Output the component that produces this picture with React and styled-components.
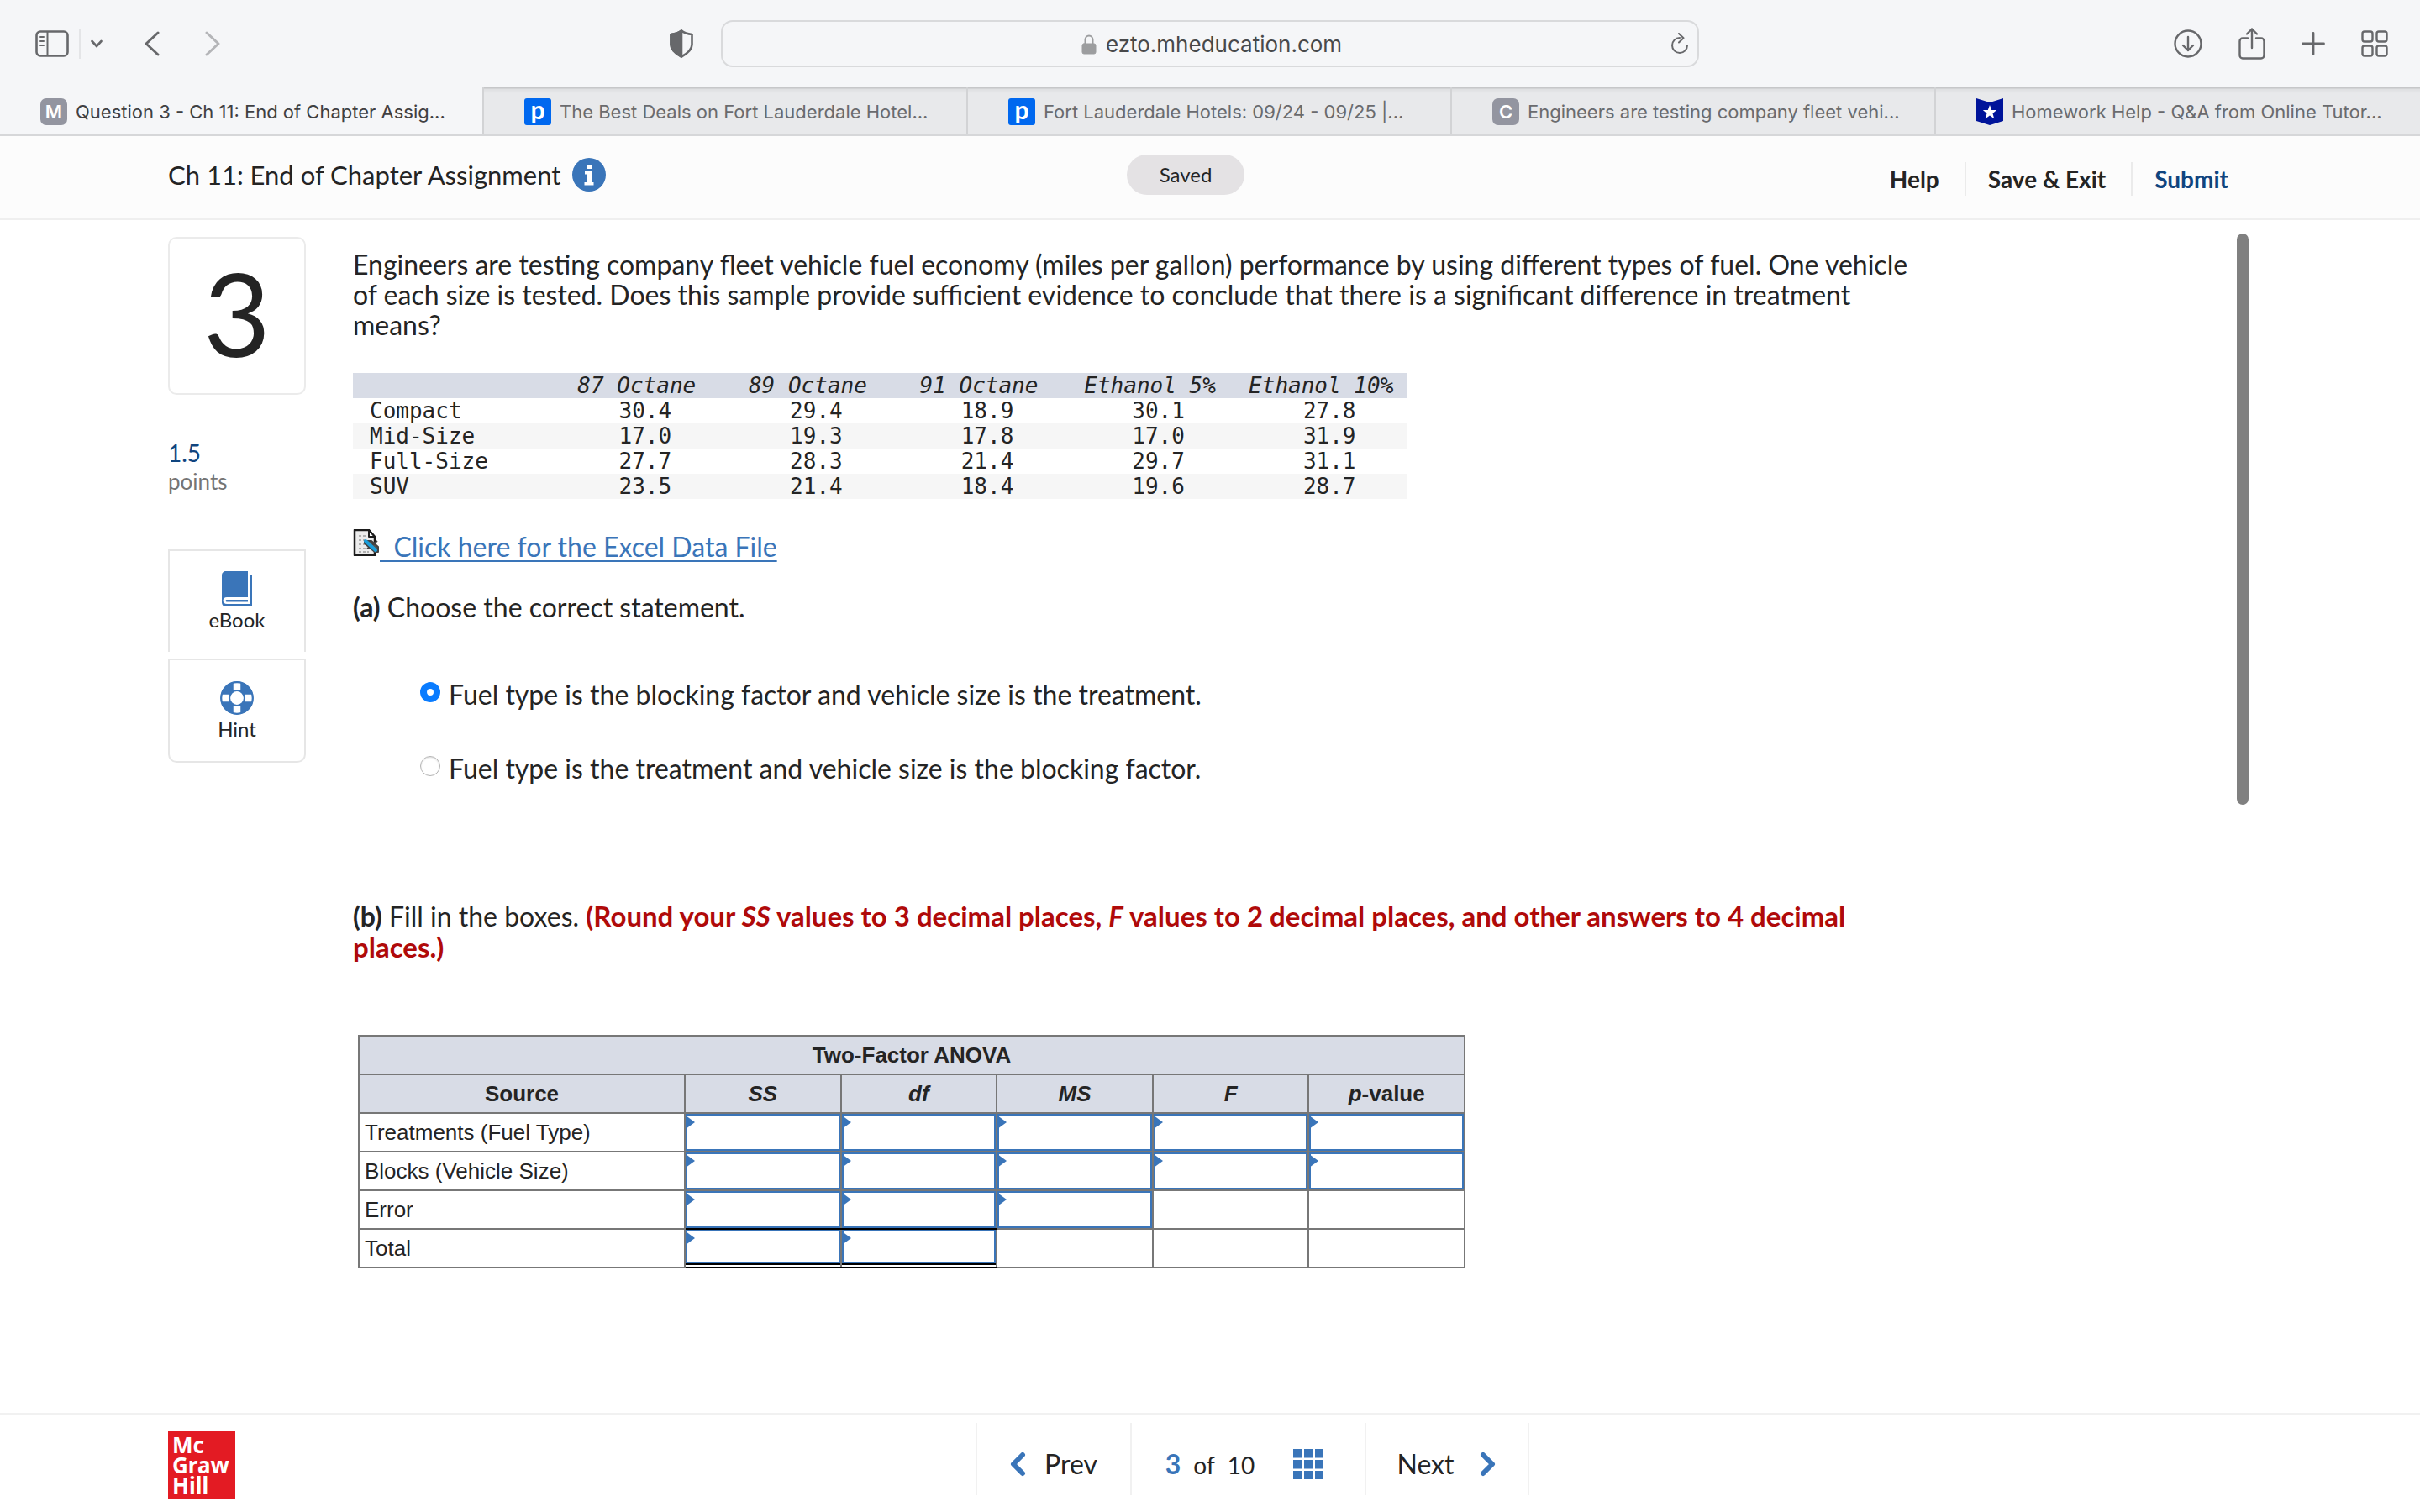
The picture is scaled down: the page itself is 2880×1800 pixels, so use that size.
import React, { useState } from "react";
import styled, { createGlobalStyle, css } from "styled-components";

const GlobalStyle = createGlobalStyle`
  *, *::before, *::after { box-sizing: border-box; }
  body { margin: 0; background: #fff; color: #242424; font-family: Lato, "Open Sans", sans-serif; }
  button { margin: 0; padding: 0; border: 0; background: none; color: inherit; font: inherit; cursor: pointer; }
  svg { display: block; flex: none; }
`;

const blue = "#3a75b9";
const navy = "#10457f";

const Page = styled.div`
  display: flex;
  flex-direction: column;
  min-height: 100vh;
`;

/* ---------- browser chrome ---------- */

const Toolbar = styled.div`
  display: flex;
  align-items: center;
  height: 104px;
  background: #f5f6f8;
  color: #67686b;
`;

const ToolSide = styled.div`
  display: flex;
  flex: 1 1 200px;
  align-items: center;
  justify-content: ${(p) => (p.$end ? "flex-end" : "flex-start")};
  gap: ${(p) => p.$gap}px;
  padding: ${(p) => (p.$end ? "0 38px 0 0" : "0 33px 0 42px")};
`;

const Split = styled.span`
  width: 2px;
  height: 36px;
  background: #e4e5e7;
`;

const History = styled.div`
  display: flex;
  gap: 54px;
  flex: 1;
  padding-left: 38px;
`;

const AddressBar = styled.div`
  display: flex;
  flex: 0 1 1164px;
  align-items: center;
  height: 56px;
  padding: 0 11px;
  border: 2px solid #d9dadc;
  border-radius: 14px;
`;

const Address = styled.div`
  display: flex;
  flex: 1;
  align-items: center;
  justify-content: center;
  gap: 11px;
  padding: 2px 0 0 26px;
  color: #48494b;
  font: 26px/32px Inter, sans-serif;
`;

const TabStrip = styled.nav`
  display: grid;
  grid-template-columns: repeat(5, 1fr);
  height: 58px;
  border-bottom: 2px solid #d6d7d9;
  background: #e8e9eb;
`;

const Tab = styled.button`
  display: flex;
  align-items: center;
  gap: 10px;
  min-width: 0;
  padding: 2px 0 0 48px;
  background: ${(p) => (p.$active ? "#f5f6f8" : "linear-gradient(#c6c7c9 0 1px, #dedfe1 2px, #e8e9eb 7px)")};
  color: ${(p) => (p.$active ? "#3f4042" : "#6a6b6e")};
  font: 22px/28px Inter, sans-serif;

  &:not(:last-child) { border-right: 2px solid #d2d3d5; }
`;

const TabTitle = styled.span`
  white-space: nowrap;
`;

const Favicon = styled.span`
  flex: none;
  width: 32px;
  height: 32px;
  border-radius: ${(p) => (p.$brand ? 3 : 7)}px;
  background: ${(p) => (p.$brand ? "#0068ef" : "#9395a0")};
  color: #fff;
  font: ${(p) => (p.$brand ? "bold 30px/26px Lato" : "600 22px/32px Inter")}, sans-serif;
  text-align: center;
`;

/* ---------- assignment header ---------- */

const Header = styled.header`
  display: grid;
  grid-template-columns: 1fr auto 1fr;
  align-items: center;
  height: 100px;
  padding: 0 258px 6px 200px;
  border-bottom: 2px solid #efefef;
  background: #fcfcfc;
`;

const TitleGroup = styled.div`
  display: flex;
  align-items: center;
  gap: 14px;
`;

const Title = styled.h1`
  margin: 0;
  font-size: 31px;
  font-weight: 400;
  line-height: 40px;
`;

const InfoButton = styled.button`
  width: 40px;
  height: 40px;
`;

const SavedPill = styled.span`
  padding: 0 39px;
  border-radius: 24px;
  background: #e4e2e4;
  font-size: 24px;
  line-height: 48px;
`;

const Actions = styled.div`
  display: flex;
  justify-content: flex-end;
  margin: 10px -30px 0 0;
`;

const Action = styled.button`
  height: 40px;
  padding: 0 0 0 26px;
  color: ${(p) => (p.$primary ? navy : "#242424")};
  font-size: 28px;
  font-weight: 700;
  line-height: 36px;

  &:not(:last-child) {
    padding-right: 30px;
    border-right: 2px solid #ebebeb;
  }
`;

/* ---------- question ---------- */

const Main = styled.main`
  display: flex;
  flex: 1;
  padding: 20px 204px 0 200px;
`;

const Side = styled.aside`
  display: flex;
  flex: none;
  flex-direction: column;
  width: 164px;
  margin-right: 56px;
`;

const NumberBox = styled.div`
  height: 188px;
  border: 2px solid #ebebeb;
  border-radius: 10px;
  font-size: 138px;
  line-height: 176px;
  text-align: center;
`;

const Points = styled.p`
  margin: 52px 0 64px;
  color: #757575;
  font-size: 26px;
  line-height: 34px;

  strong {
    display: block;
    color: ${navy};
    font-size: 28px;
    font-weight: 400;
  }
`;

const Tools = styled.div`
  display: grid;
  gap: 8px;
`;

const Tool = styled.button`
  display: flex;
  flex-direction: column;
  align-items: center;
  height: 122px;
  padding-top: 24px;
  border: 2px solid #e6e6e6;
  font-size: 24px;
  line-height: 32px;

  &:first-child { border-bottom: 0; }
  &:last-child { height: 124px; border-radius: 0 0 10px 10px; }
`;

const Question = styled.section`
  flex: 1;
  min-width: 0;
  padding-top: 15px;
  font-size: 32px;
  line-height: 36px;
`;

const Text = styled.p`
  max-width: 1880px;
  margin: 0;
`;

const Warning = styled.strong`
  color: #b00a0a;
  font-size: 33px;
`;

const DataTable = styled.table`
  width: 1254px;
  margin: 39px 0 36px;
  border-collapse: collapse;
  table-layout: fixed;
  font: 26px/30px "DejaVu Sans Mono", monospace;

  th, td { padding: 0; font-weight: 400; }
  col:first-child { width: 236px; }
  thead { background: #d8dce6; font-style: italic; }
  tbody tr:nth-child(even) { background: #f6f6f6; }
  tbody th { padding-left: 20px; text-align: left; }
  td { padding-left: 20px; text-align: center; }
`;

const FileLink = styled.a`
  display: flex;
  align-items: flex-start;
  margin-bottom: 36px;
  color: ${blue};
  text-decoration: none;
`;

const LinkText = styled.span`
  padding-top: 3px;
  white-space: pre;
  text-decoration: underline;
  text-decoration-thickness: 2px;
  text-underline-offset: 4px;
`;

const Choices = styled.fieldset`
  display: grid;
  gap: 52px;
  margin: 68px 0 139px;
  padding: 0 0 0 80px;
  border: 0;
`;

const Choice = styled.label`
  display: flex;
  align-items: flex-start;
  gap: 10px;
`;

const Radio = styled.input`
  appearance: none;
  width: 24px;
  height: 24px;
  margin: 3px 0 0;
  border: 1px solid #b4b4b4;
  border-radius: 50%;
  background: #fff;
  box-shadow: inset 0 1px 2px #ddd;

  &:checked {
    border: 8px solid #0a7cff;
    box-shadow: none;
  }
`;

const Anova = styled.table`
  width: 1318px;
  margin: 86px 0 0 6px;
  border-collapse: collapse;
  table-layout: fixed;
  font: 26px/32px "Liberation Sans", Arial, sans-serif;

  col:first-child { width: 388px; }
  th, td { height: 46px; padding: 0; border: 2px solid #777; }
  thead th { background: #d8dce6; font-weight: 700; }
  tbody th { padding-left: 6px; font-weight: 400; text-align: left; }
`;

const Cell = styled.td`
  && {
    ${(p) => p.$rule && css`border-bottom-color: #000;`}
  }
`;

const Entry = styled.div`
  position: relative;
  height: 44px;

  &::before {
    content: "";
    position: absolute;
    top: 2px;
    left: 0;
    border-style: solid;
    border-width: 8px 0 8px 11px;
    border-color: transparent transparent transparent ${blue};
  }

  ${(p) => p.$total && css`
    height: 42px;
    margin-bottom: 2px;
    border-bottom: 2px solid #000;
  `}
`;

const EntryInput = styled.input`
  display: block;
  width: 100%;
  height: 100%;
  padding: 0 12px;
  border: 2px solid ${blue};
  border-radius: 0;
  outline: 0;
  background: #fff;
  font: inherit;
  text-align: right;
`;

const ScrollThumb = styled.div`
  flex: none;
  width: 14px;
  height: 680px;
  margin-top: -4px;
  border-radius: 7px;
  background: #808080;
`;

/* ---------- footer ---------- */

const Footer = styled.footer`
  display: grid;
  grid-template-columns: 1fr auto 1fr;
  align-items: start;
  height: 118px;
  padding: 10px 100px 0 200px;
  border-top: 2px solid #f1f1f1;
`;

const Logo = styled.div`
  width: 80px;
  height: 80px;
  margin-top: 10px;
  padding: 4px 0 0 5px;
  background: #e31b23;
  color: #fff;
  font: bold 26px/24px "Noto Sans", sans-serif;
`;

const Pager = styled.nav`
  display: flex;
  height: 86px;
  font-size: 32px;
  border-right: 2px solid #f1f1f1;
`;

const PagerItem = styled.div`
  display: flex;
  align-items: center;
  justify-content: center;
  width: ${(p) => p.$width}px;
  padding-top: 11px;
  border-left: 2px solid #f1f1f1;
`;

const StepButton = styled.button`
  display: flex;
  align-items: center;
  gap: ${(p) => p.$gap}px;
`;

const Count = styled.span`
  display: flex;
  align-items: baseline;
  gap: 15px;
  margin-right: 44px;
  padding-right: 2px;
  font-size: 28px;

  strong { color: ${blue}; font-size: 32px; }
`;

const GridButton = styled.button`
  margin-right: 8px;
`;

/* ---------- icons ---------- */

const Svg = ({ w, h, children, ...rest }) => (
  <svg width={w} height={h} viewBox={`0 0 ${w} ${h}`} fill="none" stroke="currentColor" strokeWidth="2.6" strokeLinecap="round" strokeLinejoin="round" aria-hidden="true" {...rest}>
    {children}
  </svg>
);

const SidebarIcon = () => (
  <Svg w={40} h={32}>
    <rect x="1.5" y="1.5" width="37" height="29" rx="4.5" />
    <path d="M14.5 2v28M6 8h4M6 13h4M6 18h4" strokeWidth="2" />
  </Svg>
);
const BackIcon = () => <Svg w={18} h={30} strokeWidth="3"><path d="M16 2 2 15l14 13" /></Svg>;
const ForwardIcon = () => <Svg w={18} h={30} strokeWidth="3" stroke="#b4b5b8"><path d="m2 2 14 13L2 28" /></Svg>;
const ShieldIcon = () => (
  <Svg w={28} h={34}>
    <path d="M14 1.5C10.500 4.500 6 5.500 1.500 6v12c0 7 6 11 12.500 14.500C20.500 29 26.500 25 26.500 18V6C22 5.500 17.500 4.500 14 1.500Z" />
    <path d="M14 1.500C10.500 4.500 6 5.500 1.500 6v12c0 7 6 11 12.500 14.500Z" fill="currentColor" />
  </Svg>
);
const LockIcon = () => (
  <Svg w={18} h={24} stroke="#9c9d9f">
    <rect x="1" y="11" width="16" height="12" rx="2" fill="#9c9d9f" strokeWidth="1" />
    <path d="M4.500 11V6.500a4.500 5 0 0 1 9 0V11" strokeWidth="2" />
  </Svg>
);
const ReloadIcon = () => (
  <Svg w={22} h={26} strokeWidth="2">
    <path d="M12 6a9 9 0 1 0 9 9M11 1l5.500 5.200L11 11.500" />
  </Svg>
);
const DownloadIcon = () => (
  <Svg w={34} h={34} strokeWidth="2.400">
    <circle cx="17" cy="17" r="15.500" />
    <path d="M17 9v16M11 19l6 6 6-6" />
  </Svg>
);
const ShareIcon = () => (
  <Svg w={32} h={38} strokeWidth="2.400">
    <path d="M11 12.500H5a3.500 3.500 0 0 0-3.500 3.500v17A3.500 3.500 0 0 0 5 36.500h22a3.500 3.500 0 0 0 3.500-3.500V16a3.500 3.500 0 0 0-3.500-3.500h-6M16 24V1.500M10 7.500l6-6 6 6" />
  </Svg>
);
const PlusIcon = () => <Svg w={28} h={28} strokeWidth="2.800"><path d="M14 1.500v25M1.500 14h25" /></Svg>;
const TilesIcon = () => (
  <Svg w={32} h={32} strokeWidth="2.400">
    {[1.5, 18.5].map((x) => [1.5, 18.5].map((y) => <rect key={`${x}-${y}`} x={x} y={y} width="12" height="12" rx="2.500" />))}
  </Svg>
);
const StarBadge = () => (
  <Svg w={32} h={32} stroke="none">
    <path d="M0 0l16 5L32 0v27l-16 5-16-5Z" fill="#00149a" />
    <path d="m16 8 2.200 6h6l-4.700 3.900 1.700 6.300-5.200-3.700-5.200 3.700 1.700-6.300L7.800 14h6Z" fill="#fff" />
  </Svg>
);
const InfoIcon = () => (
  <Svg w={40} h={40} stroke="none">
    <circle cx="20" cy="20" r="20" fill={blue} />
    <path d="M17 8h6v5h-6zM15 16h8v13h2.500v3.500H14.500V29H17v-9.500h-2Z" fill="#fff" />
  </Svg>
);
const BookIcon = () => (
  <Svg w={36} h={42} stroke="none">
    <path d="M5 0h26v31H6c-6 0-6 8 0 8h27V5h3v37H5c-3 0-5-2-5-5V5c0-3 2-5 5-5Z" fill={blue} />
    <path d="M6 34h25v2.500H6c-2 0-2-2.500 0-2.500Z" fill={blue} />
  </Svg>
);
const HintIcon = () => (
  <Svg w={40} h={42} viewBox="0 0 40 40">
    <circle cx="20" cy="20" r="14" stroke={blue} strokeWidth="11" />
    <g stroke="#fff" strokeWidth="8.500" strokeLinecap="butt">
      <path d="M20 2v8M20 30v8M2 20h8M30 20h8" />
    </g>
    <circle cx="20" cy="20" r="18.800" stroke={blue} strokeWidth="2.200" />
    <circle cx="20" cy="20" r="9" stroke={blue} strokeWidth="2.200" />
  </Svg>
);
const FileIcon = () => (
  <Svg w={32} h={32} strokeWidth="2" strokeLinecap="butt">
    <path d="M2 1h17l7 8v22H2Z" fill="#ececec" stroke="#1c1c1c" strokeWidth="2.500" />
    <path d="M19 1v8h7Z" fill="#fff" stroke="#1c1c1c" />
    <path d="M7 8h9M7 13h7M7 18h8M7 23h9M7 27h12" stroke="#b0b0b0" strokeDasharray="3 2" />
    <path d="M14 14h8l8 7v6h-4L14 17ZM17 23l12-9" fill="#555" stroke="#444" />
    <path d="m15 14 12 11" stroke="#1a9fdc" strokeWidth="4" strokeLinecap="round" />
  </Svg>
);
const GridIcon = () => (
  <Svg w={36} h={36} stroke="none">
    {[0, 13, 26].map((x) => [0, 13, 26].map((y) => <rect key={`${x}-${y}`} x={x} y={y} width="10.500" height="10.500" fill={blue} />))}
  </Svg>
);
const StepIcon = ({ d }) => <Svg w={20} h={30} stroke={blue} strokeWidth="6"><path d={d} /></Svg>;

/* ---------- data ---------- */

const tabs = [
  { title: "Question 3 - Ch 11: End of Chapter Assig...", icon: "M" },
  { title: "The Best Deals on Fort Lauderdale Hotel...", icon: "p", brand: true },
  { title: "Fort Lauderdale Hotels: 09/24 - 09/25 |...", icon: "p", brand: true },
  { title: "Engineers are testing company fleet vehi...", icon: "C" },
  { title: "Homework Help - Q&A from Online Tutor..." },
];

const fuels = ["87 Octane", "89 Octane", "91 Octane", "Ethanol 5%", "Ethanol 10%"];
const mileage = [
  ["Compact", "30.4", "29.4", "18.9", "30.1", "27.8"],
  ["Mid-Size", "17.0", "19.3", "17.8", "17.0", "31.9"],
  ["Full-Size", "27.7", "28.3", "21.4", "29.7", "31.1"],
  ["SUV", "23.5", "21.4", "18.4", "19.6", "28.7"],
];

const choices = [
  "Fuel type is the blocking factor and vehicle size is the treatment.",
  "Fuel type is the treatment and vehicle size is the blocking factor.",
];

const columns = ["SS", "df", "MS", "F", "p-value"];
const sources = [
  { name: "Treatments (Fuel Type)", entries: 5 },
  { name: "Blocks (Vehicle Size)", entries: 5 },
  { name: "Error", entries: 3 },
  { name: "Total", entries: 2 },
];

export default function App() {
  const [choice, setChoice] = useState(0);
  return (
    <Page>
      <GlobalStyle />
      <Toolbar>
        <ToolSide $gap={12}>
          <button aria-label="Sidebar"><SidebarIcon /></button>
          <Split />
          <button aria-label="Tab groups"><Svg w={14} h={10}><path d="m1.500 2 5.500 6 5.500-6" /></Svg></button>
          <History>
            <button aria-label="Back"><BackIcon /></button>
            <button aria-label="Forward"><ForwardIcon /></button>
          </History>
          <button aria-label="Privacy report"><ShieldIcon /></button>
        </ToolSide>
        <AddressBar>
          <Address><LockIcon />ezto.mheducation.com</Address>
          <button aria-label="Reload"><ReloadIcon /></button>
        </AddressBar>
        <ToolSide $end $gap={43}>
          <button aria-label="Downloads"><DownloadIcon /></button>
          <button aria-label="Share"><ShareIcon /></button>
          <button aria-label="New tab"><PlusIcon /></button>
          <button aria-label="Tab overview"><TilesIcon /></button>
        </ToolSide>
      </Toolbar>
      <TabStrip>
        {tabs.map((t, i) => (
          <Tab key={t.title} $active={i === 0}>
            {t.icon ? <Favicon $brand={t.brand}>{t.icon}</Favicon> : <StarBadge />}
            <TabTitle>{t.title}</TabTitle>
          </Tab>
        ))}
      </TabStrip>

      <Header>
        <TitleGroup>
          <Title>Ch 11: End of Chapter Assignment</Title>
          <InfoButton aria-label="Assignment information"><InfoIcon /></InfoButton>
        </TitleGroup>
        <SavedPill>Saved</SavedPill>
        <Actions>
          <Action>Help</Action>
          <Action>Save &amp; Exit</Action>
          <Action $primary>Submit</Action>
        </Actions>
      </Header>

      <Main>
        <Side>
          <NumberBox>3</NumberBox>
          <Points><strong>1.5</strong>points</Points>
          <Tools>
            <Tool><BookIcon />eBook</Tool>
            <Tool><HintIcon />Hint</Tool>
          </Tools>
        </Side>
        <Question>
          <Text>
            Engineers are testing company fleet vehicle fuel economy (miles per gallon) performance by using different types of fuel. One vehicle of each size is tested. Does this sample provide sufficient evidence to conclude that there is a significant difference in treatment means?
          </Text>
          <DataTable>
            <colgroup><col />{fuels.map((f) => <col key={f} />)}</colgroup>
            <thead>
              <tr><th aria-label="Vehicle size" />{fuels.map((f) => <th key={f} scope="col">{f}</th>)}</tr>
            </thead>
            <tbody>
              {mileage.map(([name, ...values]) => (
                <tr key={name}>
                  <th scope="row">{name}</th>
                  {values.map((v, i) => <td key={fuels[i]}>{v}</td>)}
                </tr>
              ))}
            </tbody>
          </DataTable>
          <FileLink href="#data"><FileIcon /><LinkText>{"  Click here for the Excel Data File"}</LinkText></FileLink>
          <Text><strong>(a)</strong> Choose the correct statement.</Text>
          <Choices aria-label="Choose the correct statement">
            {choices.map((c, i) => (
              <Choice key={c}>
                <Radio type="radio" name="statement" checked={choice === i} onChange={() => setChoice(i)} />
                {c}
              </Choice>
            ))}
          </Choices>
          <Text>
            <strong>(b)</strong> Fill in the boxes.{" "}
            <Warning>(Round your <i>SS</i> values to 3 decimal places, <i>F</i> values to 2 decimal places, and other answers to 4 decimal places.)</Warning>
          </Text>
          <Anova>
            <colgroup><col />{columns.map((c) => <col key={c} />)}</colgroup>
            <thead>
              <tr><th colSpan={6}>Two-Factor ANOVA</th></tr>
              <tr>
                <th scope="col">Source</th>
                {columns.map((c) => (
                  <th key={c} scope="col">{c === "p-value" ? <><i>p</i>-value</> : <i>{c}</i>}</th>
                ))}
              </tr>
            </thead>
            <tbody>
              {sources.map(({ name, entries }, row) => (
                <tr key={name}>
                  <th scope="row">{name}</th>
                  {columns.map((c, i) => (
                    <Cell key={c} $rule={row > 1 && i < 2}>
                      {i < entries && (
                        <Entry $total={row === 3}><EntryInput aria-label={`${name} ${c}`} /></Entry>
                      )}
                    </Cell>
                  ))}
                </tr>
              ))}
            </tbody>
          </Anova>
        </Question>
        <ScrollThumb />
      </Main>

      <Footer>
        <Logo>Mc<br />Graw<br />Hill</Logo>
        <Pager aria-label="Questions">
          <PagerItem $width={184}>
            <StepButton $gap={22}><StepIcon d="M16 4 5 15l11 11" />Prev</StepButton>
          </PagerItem>
          <PagerItem $width={279}>
            <Count><strong>3</strong><span>of</span><span>10</span></Count>
            <GridButton aria-label="All questions"><GridIcon /></GridButton>
          </PagerItem>
          <PagerItem $width={194}>
            <StepButton $gap={30}>Next<StepIcon d="m4 4 11 11L4 26" /></StepButton>
          </PagerItem>
        </Pager>
      </Footer>
    </Page>
  );
}
